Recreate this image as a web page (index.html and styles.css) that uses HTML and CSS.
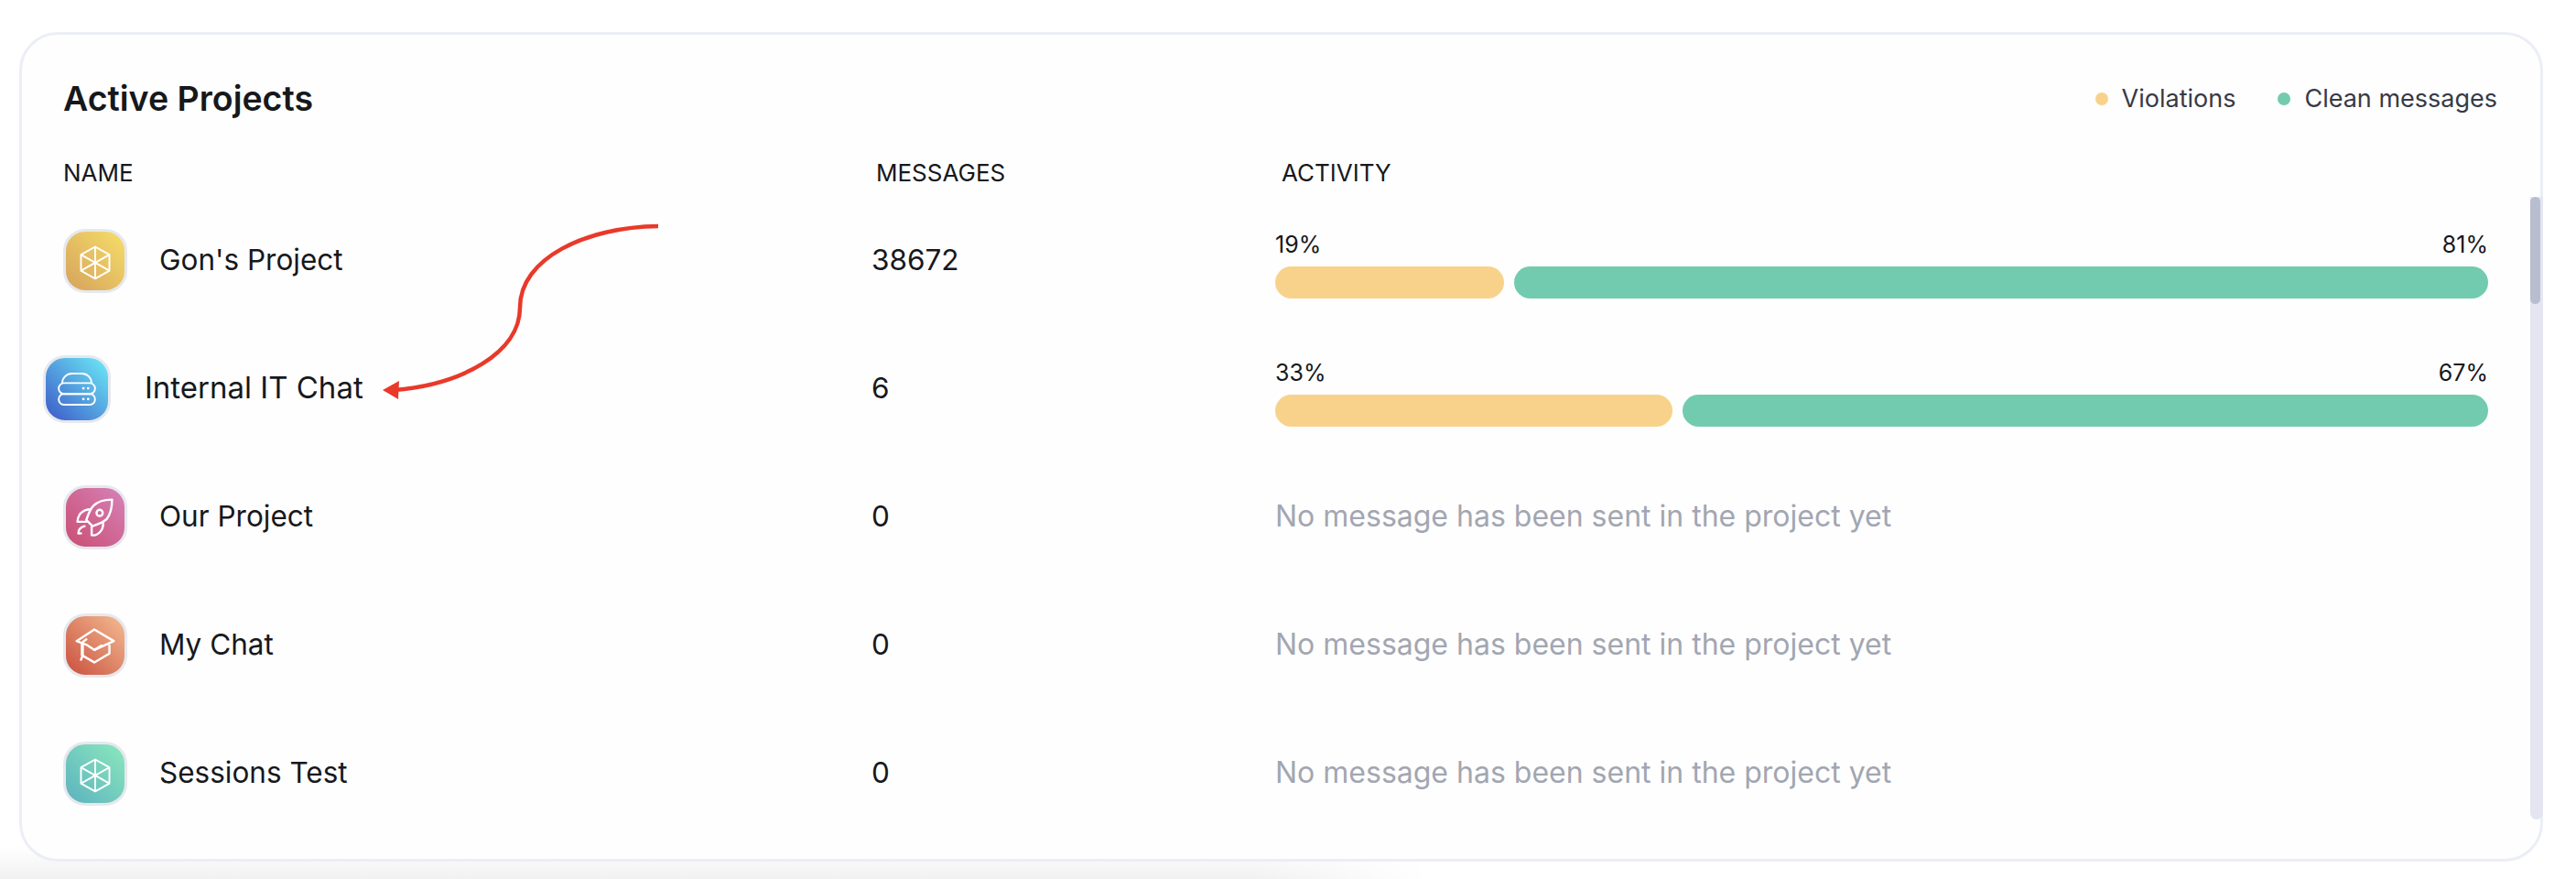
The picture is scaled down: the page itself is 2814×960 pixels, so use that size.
FILE: index.html
```html
<!DOCTYPE html>
<html lang="en">
<head>
  <meta charset="UTF-8" />
  <title>Active Projects</title>
  <link rel="stylesheet" href="styles.css">
</head>
<body>
  <div class="card">
    <div class="card-head">
      <h2 class="title">Active Projects</h2>
      <div class="legend">
        <span class="legend-item"><i class="dot dot-gold"></i>Violations</span>
        <span class="legend-item"><i class="dot dot-green"></i>Clean messages</span>
      </div>
    </div>

    <div class="table-head">
      <span class="th-name">NAME</span>
      <span class="th-messages">MESSAGES</span>
      <span class="th-activity">ACTIVITY</span>
    </div>

    <div class="row">
      <div class="name">
        <span class="icon gold">
          <svg viewBox="0 0 66 66"><path d="M33 17 49 26V44L33 53 17 44V26ZM33 17V53M17 26 49 44M49 26 17 44"/></svg>
        </span>
        Gon's Project
      </div>
      <div class="count">38672</div>
      <div class="activity">
        <div class="percents"><span>19%</span><span>81%</span></div>
        <div class="bars">
          <div class="bar bar-gold" style="flex-grow: 19"></div>
          <div class="bar bar-green" style="flex-grow: 81"></div>
        </div>
      </div>
    </div>

    <div class="row">
      <div class="name name-focus">
        <span class="icon blue">
          <svg viewBox="0 0 72 72">
            <path d="M19 29C19 23 24 18 30 18H42C48 18 53 23 53 29"/>
            <rect x="15" y="29" width="42" height="12.5" rx="6"/>
            <rect x="15" y="41.5" width="42" height="12.5" rx="6"/>
            <path class="pips" d="M43.5 35h.01M49 35h.01M43.5 47.5h.01M49 47.5h.01"/>
          </svg>
        </span>
        Internal IT Chat
      </div>
      <div class="count">6</div>
      <div class="activity">
        <div class="percents"><span>33%</span><span>67%</span></div>
        <div class="bars">
          <div class="bar bar-gold" style="flex-grow: 33"></div>
          <div class="bar bar-green" style="flex-grow: 67"></div>
        </div>
      </div>
    </div>

    <div class="row">
      <div class="name">
        <span class="icon pink">
          <svg class="bold" viewBox="0 0 66 66">
            <path d="M52 13C44 13 36 15 31 20 27 24 25 30 23 36L30 43C36 41 42 39 46 35 50 30 52 22 52 13Z"/>
            <circle cx="38" cy="28" r="3.5"/>
            <path d="M28 24C23 24 19 26 16 29 14 32 13 35 13 38H23M42 40C42 45 40 48 38 50 36 52 32 54 29 53V43M21 43C17 44 14 47 14 51H17"/>
          </svg>
        </span>
        Our Project
      </div>
      <div class="count">0</div>
      <div class="activity empty">No message has been sent in the project yet</div>
    </div>

    <div class="row">
      <div class="name">
        <span class="icon orange">
          <svg class="bold" viewBox="0 0 66 66">
            <path d="M32 15 54 28 32 38 23 32 12 28Z"/>
            <path d="M18 31V44L32 52 49 42V33"/>
            <path d="M23 26 19 29V44L17 49M32 38 40 33"/>
          </svg>
        </span>
        My Chat
      </div>
      <div class="count">0</div>
      <div class="activity empty">No message has been sent in the project yet</div>
    </div>

    <div class="row">
      <div class="name">
        <span class="icon teal">
          <svg viewBox="0 0 66 66"><path d="M33 17 49 26V44L33 53 17 44V26ZM33 17V53M17 26 49 44M49 26 17 44"/></svg>
        </span>
        Sessions Test
      </div>
      <div class="count">0</div>
      <div class="activity empty">No message has been sent in the project yet</div>
    </div>

    <div class="scrollbar"><div class="thumb"></div></div>
  </div>

  <!-- hand drawn annotation on top of the screenshot -->
  <svg class="arrow" viewBox="0 0 2814 960">
    <path class="arrow-line" d="M719 247C640 248 568 282 568 336 568 385 505 420 430 426"/>
    <path class="arrow-head" d="M418 426 436 416 435 436Z"/>
  </svg>
</body>
</html>
```

FILE: styles.css
```css
* {
  box-sizing: border-box;
}

body {
  margin: 0;
  height: 960px;
  overflow: hidden;
  padding: 35px 36px 0 21px;
  font-family: "Inter", sans-serif;
  color: #17181c;
  background-color: #fff;
  position: relative;
}

/* soft grey fade left over from the page below the card */
body::after {
  content: "";
  position: absolute;
  left: 0;
  bottom: 0;
  width: 1560px;
  height: 36px;
  background: linear-gradient(to bottom, #fff, #f1f1f2);
  -webkit-mask-image: linear-gradient(to right, #000 88%, transparent);
  mask-image: linear-gradient(to right, #000 88%, transparent);
  z-index: -1;
}

.card {
  position: relative;
  height: 906px;
  border: 3px solid #eceef6;
  border-radius: 42px;
  background-color: #fefefe;
  padding: 0 57px 0 45px;
}

.card-head {
  display: flex;
  justify-content: space-between;
  align-items: center;
  height: 69px;
  margin-top: 35px;
}

.title {
  margin: 0;
  font-size: 37.5px;
  font-weight: 600;
}

.legend {
  display: flex;
  gap: 46px;
  margin-right: -10px;
  font-size: 27px;
  color: #373a47;
}

.legend-item {
  display: flex;
  align-items: center;
  gap: 15px;
}

.dot {
  width: 14px;
  height: 14px;
  border-radius: 50%;
}

.dot-gold { background-color: #f8d28b; }
.dot-green { background-color: #72cbaf; }

.table-head {
  display: grid;
  grid-template-columns: 888px 443px 1fr;
  align-items: center;
  height: 36px;
  margin-top: 28px;
  margin-bottom: 7px;
  font-size: 26px;
}

.row {
  display: grid;
  grid-template-columns: 883px 441px 1fr;
  align-items: center;
  height: 140px;
  font-size: 31.5px;
}

.name {
  display: flex;
  align-items: center;
  gap: 35px;
}

.name-focus {
  margin-left: -22px;
  gap: 37px;
  font-size: 33px;
}

.icon {
  display: block;
  width: 70px;
  height: 70px;
  margin-top: 2px;
  margin-bottom: -2px;
  border: 3px solid #e6e8ee;
  border-radius: 24px;
}

.name-focus .icon {
  width: 74px;
  height: 74px;
}

.icon svg {
  display: block;
  width: 100%;
  height: 100%;
  fill: none;
  stroke: #fff;
  stroke-width: 2;
  stroke-linejoin: round;
  stroke-linecap: round;
}

.icon svg.bold {
  stroke-width: 2.5;
}

.icon .pips {
  stroke-width: 3;
}

.gold { background: linear-gradient(45deg, #d6a25c, #f6de69); }
.blue { background: linear-gradient(45deg, #3c58c8, #6cecf7); }
.pink { background: linear-gradient(45deg, #c94e73, #d682b8); }
.orange { background: linear-gradient(45deg, #ca4f3e, #f3bc92); }
.teal { background: linear-gradient(45deg, #5cb2bf, #8be8bc); }

.activity {
  margin-top: 8px;
}

.activity.empty {
  margin-top: 0;
  font-size: 32px;
  color: #a2a6b2;
}

.percents {
  display: flex;
  justify-content: space-between;
  height: 36px;
  line-height: 36px;
  margin-bottom: 6px;
  font-size: 25px;
}

.bars {
  display: flex;
  gap: 11px;
}

.bar {
  height: 35px;
  flex-basis: 0;
  border-radius: 18px;
}

.bar-gold { background-color: #f8d28b; }
.bar-green { background-color: #72cbaf; }

/* custom scrollbar sits on the card's right edge */
.scrollbar {
  position: absolute;
  top: 177px;
  right: -3px;
  width: 14px;
  height: 680px;
  border-radius: 0 0 7px 7px;
  background-color: #e3e6f1;
}

.thumb {
  width: 11px;
  height: 117px;
  border-radius: 6px;
  background-color: #b8bdcf;
}

.arrow {
  position: absolute;
  left: 0;
  top: 0;
  width: 2814px;
  height: 960px;
  pointer-events: none;
}

.arrow-line {
  fill: none;
  stroke: #e9392a;
  stroke-width: 4.5;
}

.arrow-head {
  fill: #e9392a;
}
```
